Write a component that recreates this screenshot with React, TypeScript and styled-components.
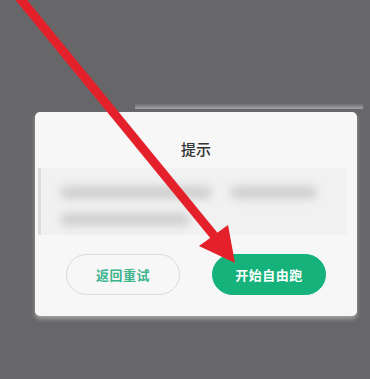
import React from 'react';
import styled, { createGlobalStyle } from 'styled-components';

const GlobalStyle = createGlobalStyle`
  html, body {
    margin: 0;
    padding: 0;
    background: #676769;
    font-family: "Noto Sans CJK SC", "Noto Sans", sans-serif;
  }
`;

const Page = styled.div`
  position: relative;
  width: 370px;
  height: 379px;
  overflow: hidden;
  background: #676769;
  display: flex;
  flex-direction: column;
`;

const GhostStrip = styled.div`
  margin: 104px 0 0 135px;
  width: 228px;
  height: 5px;
  background: linear-gradient(180deg, #6f6f71 0%, #a3a3a5 100%);
  filter: blur(0.5px);
`;

const Card = styled.div`
  margin: 3px 0 0 35px;
  width: 322px;
  height: 204px;
  box-sizing: border-box;
  background: #f7f7f8;
  border-radius: 5px;
  box-shadow: 0 3px 4px rgba(200, 200, 202, 0.6);
  display: flex;
  flex-direction: column;
  padding: 27px 0 21px;
`;

const Title = styled.div`
  text-align: center;
  font-size: 15px;
  line-height: 20px;
  font-weight: 500;
  color: #333;
`;

const Blurred = styled.div`
  margin: 9px 10px 0 3px;
  height: 67px;
  background: #f1f1f2;
  border-left: 3px solid #dcdcdd;
  box-sizing: border-box;
  display: flex;
  flex-direction: column;
  gap: 14px;
  padding: 18px 0 0 19px;
`;

const BlurRow = styled.div`
  display: flex;
  gap: 18px;
`;

const BlurBar = styled.div<{ w: number }>`
  width: ${p => p.w}px;
  height: 13px;
  border-radius: 7px;
  background: #d0d0d1;
  filter: blur(4px);
`;

const Actions = styled.div`
  margin-top: auto;
  display: flex;
  justify-content: center;
  gap: 32px;
`;

const Button = styled.button<{ primary?: boolean }>`
  width: 114px;
  height: 41px;
  border-radius: 21px;
  font-family: inherit;
  font-size: 13px;
  font-weight: 700;
  letter-spacing: 0.5px;
  cursor: pointer;
  border: 1px solid ${p => (p.primary ? '#15b27b' : '#dadada')};
  background: ${p => (p.primary ? '#15b27b' : '#f7f7f8')};
  color: ${p => (p.primary ? '#ffffff' : '#3cb58c')};
`;

const Arrow = styled.svg`
  position: absolute;
  left: 0;
  top: 0;
  pointer-events: none;
`;

export default function App() {
  return (
    <>
      <GlobalStyle />
      <Page>
        <GhostStrip />
        <Card>
          <Title>提示</Title>
          <Blurred>
            <BlurRow>
              <BlurBar w={152} />
              <BlurBar w={87} />
            </BlurRow>
            <BlurRow>
              <BlurBar w={130} />
            </BlurRow>
          </Blurred>
          <Actions>
            <Button>返回重试</Button>
            <Button primary>开始自由跑</Button>
          </Actions>
        </Card>
        <Arrow width="370" height="379" viewBox="0 0 370 379">
          <line x1="18" y1="-4" x2="216" y2="238" stroke="#e4212b" strokeWidth="9" />
          <polygon points="199,246 228,225 235,263" fill="#e4212b" />
        </Arrow>
      </Page>
    </>
  );
}
